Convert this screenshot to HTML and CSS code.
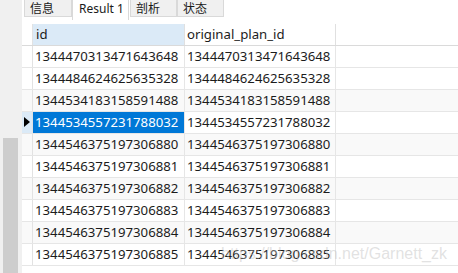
FILE: index.html
```html
<!DOCTYPE html>
<html>
<head>
<meta charset="utf-8">
<link rel="stylesheet" href="styles.css">
</head>
<body>
<div class="app">
  <div class="side"><div class="side-block"></div></div>
  <div class="main">
    <div class="tabs">
      <div class="tab t1">信息</div>
      <div class="tab active t2">Result 1</div>
      <div class="tab t3">剖析</div>
      <div class="tab t4">状态</div>
    </div>
    <div class="grid">
      <div class="row head"><div class="rh"></div><div class="c sorted">id</div><div class="c">original_plan_id</div></div>
      <div class="row"><div class="rh"></div><div class="c">1344470313471643648</div><div class="c">1344470313471643648</div></div>
      <div class="row"><div class="rh"></div><div class="c">1344484624625635328</div><div class="c">1344484624625635328</div></div>
      <div class="row alt"><div class="rh"></div><div class="c">1344534183158591488</div><div class="c">1344534183158591488</div></div>
      <div class="row cur"><div class="rh"><span class="arrow"></span></div><div class="c sel">1344534557231788032</div><div class="c">1344534557231788032</div></div>
      <div class="row alt"><div class="rh"></div><div class="c">1344546375197306880</div><div class="c">1344546375197306880</div></div>
      <div class="row"><div class="rh"></div><div class="c">1344546375197306881</div><div class="c">1344546375197306881</div></div>
      <div class="row alt"><div class="rh"></div><div class="c">1344546375197306882</div><div class="c">1344546375197306882</div></div>
      <div class="row"><div class="rh"></div><div class="c">1344546375197306883</div><div class="c">1344546375197306883</div></div>
      <div class="row alt"><div class="rh"></div><div class="c">1344546375197306884</div><div class="c">1344546375197306884</div></div>
      <div class="row"><div class="rh"></div><div class="c">1344546375197306885</div><div class="c">1344546375197306885</div></div>
    </div>
  </div>
</div>
<div class="watermark">https://blog.csdn.net/Garnett_zk</div>
</body>
</html>
```

FILE: styles.css
```css
html, body {
  margin: 0;
  padding: 0;
  background: #ffffff;
}
body {
  width: 458px;
  height: 273px;
  overflow: hidden;
  position: relative;
  font-family: "Noto Sans", "Noto Sans CJK SC", sans-serif;
  color: #1c1c1c;
}
.app {
  display: flex;
  height: 273px;
}
.side {
  width: 22px;
  flex: none;
  background: #f0f0f0;
  padding: 138px 0 0 3px;
  box-sizing: border-box;
}
.side-block {
  width: 15px;
  height: 135px;
  background: #cdcdcd;
}
.main {
  flex: 1;
  display: flex;
  flex-direction: column;
}
.tabs {
  display: flex;
  height: 24px;
  padding-left: 2px;
  align-items: flex-start;
}
.tab {
  height: 17px;
  box-sizing: border-box;
  background: #f0f0f0;
  border: 1px solid #d9d9d9;
  border-top: none;
  font-family: "Noto Sans CJK SC", sans-serif;
  font-size: 12px;
  line-height: 16px;
  color: #1a1a1a;
  padding-left: 5px;
  white-space: nowrap;
}
.t1 { width: 48px; }
.t2 { width: 57px; }
.t3 { width: 47px; margin-left: 1px; }
.t4 { width: 47px; }
.tab.active {
  background: #ffffff;
  height: 20px;
  border-bottom: none;
  font-family: "Noto Sans", sans-serif;
  font-size: 12px;
  padding-left: 6px;
  line-height: 17px;
}
.grid {
  display: flex;
  flex-direction: column;
}
.row {
  display: grid;
  grid-template-columns: 11px 152px 151px;
  height: 22px;
  box-sizing: border-box;
  border-bottom: 1px solid #e6e6e6;
}
.row.alt { background: #f9f9f9; }
.row.head {
  border-bottom: 1px solid #dadada;
  background: #ffffff;
}
.rh {
  border-right: 1px solid #e2e2e2;
  position: relative;
}
.c {
  border-right: 1px solid #e6e6e6;
  font-size: 13.2px;
  line-height: 20px;
  padding-left: 2px;
  white-space: nowrap;
  overflow: hidden;
}
.row.head .c { border-right-color: #e0e0e0; }
.c.sorted {
  background: #dbeaf7;
  padding-left: 3px;
}
.c.sel {
  background: #0078d7;
  color: #ffffff;
}
.row.cur .rh { background: #dbeaf7; }
.arrow {
  position: absolute;
  left: 2px;
  top: 5px;
  width: 0;
  height: 0;
  border-top: 5px solid transparent;
  border-bottom: 5px solid transparent;
  border-left: 6px solid #000000;
}
.watermark {
  position: absolute;
  right: 11px;
  top: 245px;
  font-family: "Liberation Sans", sans-serif;
  font-size: 16px;
  color: rgba(190, 190, 190, 0.45);
  white-space: nowrap;
}
```
